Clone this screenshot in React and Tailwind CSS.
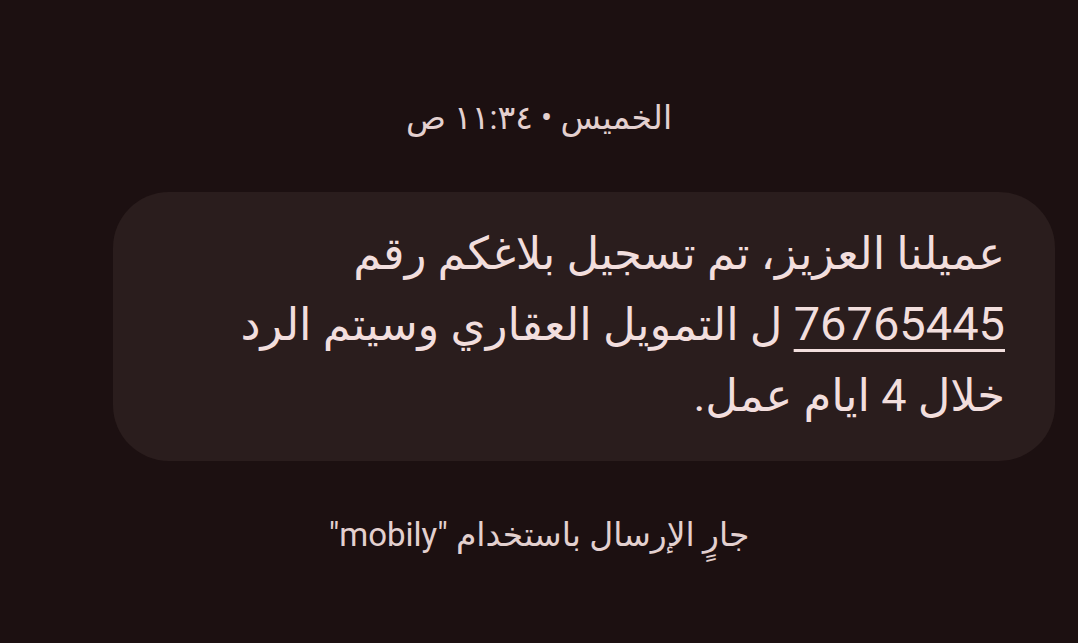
export default function App() {
  return (
    <div
      dir="rtl"
      className="h-[643px] w-full overflow-hidden bg-[#1c1011] text-[#f2dedd] font-['Roboto','DejaVu_Sans',sans-serif]"
    >
      <div className="flex flex-col">
        <p className="mt-[94px] text-center text-[33px] leading-[48px] text-[#e3d0cf]">
          الخميس • ١١:٣٤ ص
        </p>

        <div className="mt-[50px] ml-[113px] mr-[23px] h-[269px] rounded-[56px] bg-[#2a1d1d] pr-[50px] pt-[26px]">
          <p className="text-[45px] leading-[71px]">
            عميلنا العزيز، تم تسجيل بلاغكم رقم
            <br />
            <span className="text-[47px] leading-none underline decoration-[3px] underline-offset-[9px]">76765445</span> ل التمويل العقاري وسيتم الرد
            <br />
            خلال 4 ايام عمل.
          </p>
        </div>

        <p className="mt-[50px] text-center text-[33px] leading-[48px] text-[#e3d0cf]">
          جارٍ الإرسال باستخدام "mobily"
        </p>
      </div>
    </div>
  );
}
